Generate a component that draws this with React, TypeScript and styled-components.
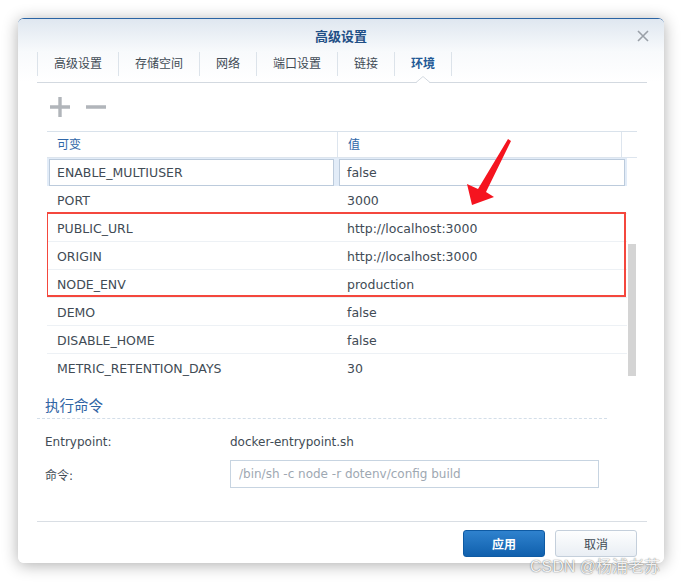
import React from "react";
import styled, { createGlobalStyle } from "styled-components";

const GlobalStyle = createGlobalStyle`
  html, body { margin: 0; padding: 0; background: #fff; }
  body {
    font-family: "DejaVu Sans", "Noto Sans CJK SC", sans-serif;
    color: #414b55;
  }
  * { box-sizing: border-box; }
`;

const tabs = ["高级设置", "存储空间", "网络", "端口设置", "链接", "环境"];

const envRows = [
  { name: "PORT", value: "3000" },
  { name: "PUBLIC_URL", value: "http://localhost:3000" },
  { name: "ORIGIN", value: "http://localhost:3000" },
  { name: "NODE_ENV", value: "production" },
  { name: "DEMO", value: "false" },
  { name: "DISABLE_HOME", value: "false" },
  { name: "METRIC_RETENTION_DAYS", value: "30" },
];

export default function App() {
  return (
    <Page>
      <GlobalStyle />
      <Dialog>
        <TitleBar>
          <span />
          <Title>高级设置</Title>
          <CloseButton>
            <svg width="12" height="12" viewBox="0 0 12 12">
              <path d="M1 1 L11 11 M11 1 L1 11" stroke="#9aa0a8" strokeWidth="1.6" />
            </svg>
          </CloseButton>
        </TitleBar>

        <Content>
          <TabBar>
            {tabs.map((t, i) => (
              <Tab key={t} $active={i === tabs.length - 1}>
                {t}
                {i === tabs.length - 1 && (
                  <Notch width="14" height="7" viewBox="0 0 14 7">
                    <path d="M0 7 L7 0.5 L14 7 Z" fill="#fff" />
                    <path d="M0 6.5 L7 0.5 L14 6.5" fill="none" stroke="#d3d9e0" strokeWidth="1" />
                  </Notch>
                )}
              </Tab>
            ))}
          </TabBar>

          <Panel>
            <Toolbar>
              <svg width="20" height="20" viewBox="0 0 20 20">
                <path d="M10 0 V20 M0 10 H20" stroke="#b1b5ba" strokeWidth="3.4" />
              </svg>
              <svg width="20" height="20" viewBox="0 0 20 20">
                <path d="M0 10 H20" stroke="#b1b5ba" strokeWidth="3.4" />
              </svg>
            </Toolbar>

            <Table>
              <HeaderRow>
                <HeaderCell>可变</HeaderCell>
                <HeaderCell>值</HeaderCell>
                <HeaderCell $last />
              </HeaderRow>
              <Body>
                <Rows>
                  <EditRow>
                    <EditBox $first>ENABLE_MULTIUSER</EditBox>
                    <EditBox>false</EditBox>
                  </EditRow>
                  {envRows.map((r) => (
                    <Row key={r.name}>
                      <Cell>{r.name}</Cell>
                      <Cell>{r.value}</Cell>
                    </Row>
                  ))}
                  <Highlight />
                </Rows>
                <ScrollTrack>
                  <ScrollThumb />
                </ScrollTrack>
              </Body>
            </Table>
          </Panel>

          <SectionTitle>执行命令</SectionTitle>
          <Form>
            <FormRow>
              <Label>Entrypoint:</Label>
              <Value>docker-entrypoint.sh</Value>
            </FormRow>
            <FormRow $tall>
              <Label>命令:</Label>
              <CommandInput placeholder="/bin/sh -c node -r dotenv/config build" />
            </FormRow>
          </Form>

          <Footer>
            <Button $primary>应用</Button>
            <Button>取消</Button>
          </Footer>
        </Content>
      </Dialog>

      <Arrow width="60" height="75" viewBox="0 0 60 75">
        <polygon points="48,4 51,6 26,57 34,62 12,70 7,49 18,54" fill="#f5141f" />
      </Arrow>
      <Watermark>CSDN @杨浦老苏</Watermark>
    </Page>
  );
}

const Page = styled.div`
  position: relative;
  width: 682px;
  height: 582px;
  padding: 18px 0 0 18px;
  overflow: hidden;
`;

const Dialog = styled.div`
  width: 646px;
  height: 545px;
  display: flex;
  flex-direction: column;
  background: #fff;
  border-top: 1px solid #2a64a4;
  border-radius: 6px;
  box-shadow: 0 2px 16px rgba(0, 0, 0, 0.32);
  overflow: hidden;
`;

const TitleBar = styled.div`
  height: 33px;
  display: grid;
  grid-template-columns: 1fr auto 1fr;
  align-items: center;
  background: linear-gradient(#dfe7f0, #f8fafc);
`;

const Title = styled.div`
  font-size: 13px;
  font-weight: bold;
  color: #1f4f86;
  margin-top: -1px;
`;

const CloseButton = styled.div`
  justify-self: end;
  margin-right: 15px;
  display: flex;
`;

const Content = styled.div`
  flex: 1;
  display: flex;
  flex-direction: column;
  padding: 0 17px 0 19px;
  background: linear-gradient(#f8fafc, #fff 30px);
`;

const TabBar = styled.div`
  height: 31px;
  display: flex;
  align-items: flex-start;
  border-bottom: 1px solid #d3d9e0;
`;

const Tab = styled.div<{ $active?: boolean }>`
  position: relative;
  height: 24px;
  padding: 0 16px;
  display: flex;
  align-items: center;
  font-size: 12px;
  line-height: 1;
  border-left: 1px solid #dce3ea;
  color: ${(p) => (p.$active ? "#245a96" : "#414b55")};
  font-weight: ${(p) => (p.$active ? "bold" : "normal")};
  &:last-child {
    border-right: 1px solid #dce3ea;
  }
`;

const Notch = styled.svg`
  position: absolute;
  left: 50%;
  margin-left: -7px;
  bottom: -7px;
`;

const Panel = styled.div`
  padding: 0 10px;
`;

const Toolbar = styled.div`
  height: 48px;
  display: flex;
  align-items: center;
  gap: 16px;
  padding-left: 3px;
`;

const Table = styled.div`
  border-top: 1px solid #d9e2eb;
`;

const HeaderRow = styled.div`
  display: grid;
  grid-template-columns: 291px 284px 1fr;
  height: 26px;
  border-bottom: 1px solid #dde5ee;
`;

const HeaderCell = styled.div<{ $last?: boolean }>`
  padding-left: 10px;
  line-height: 27px;
  font-size: 12px;
  color: #2f66a8;
  border-right: ${(p) => (p.$last ? "none" : "1px solid #dde5ee")};
`;

const Body = styled.div`
  display: flex;
  height: 219px;
  overflow: hidden;
`;

const Rows = styled.div`
  position: relative;
  width: 580px;
`;

const Row = styled.div`
  display: grid;
  grid-template-columns: 290px 1fr;
  align-items: center;
  height: 28px;
  padding-top: 1px;
  border-bottom: 1px solid #edf1f5;
`;

const EditRow = styled.div`
  display: grid;
  grid-template-columns: 290px 1fr;
  height: 28px;
  padding-top: 1px;
  background: #e2ecf8;
`;

const Cell = styled.div`
  padding-left: 10px;
  font-size: 12.5px;
  white-space: nowrap;
`;

const EditBox = styled.div<{ $first?: boolean }>`
  height: 27px;
  margin: ${(p) => (p.$first ? "0 3px 0 2px" : "0 2px")};
  padding-left: 7px;
  display: flex;
  align-items: center;
  font-size: 12.5px;
  background: #fff;
  border: 1px solid #bccbdc;
`;

const Highlight = styled.div`
  position: absolute;
  left: -1px;
  top: 54px;
  width: 580px;
  height: 85px;
  border: 2px solid #f4473d;
  pointer-events: none;
`;

const ScrollTrack = styled.div`
  width: 10px;
  padding-left: 1px;
`;

const ScrollThumb = styled.div`
  width: 8px;
  height: 132px;
  margin-top: 86px;
  background: #d4d4d4;
`;

const SectionTitle = styled.div`
  width: 570px;
  height: 24px;
  margin-top: 18px;
  padding-left: 8px;
  font-size: 14.5px;
  line-height: 22px;
  color: #2f64a4;
  border-bottom: 1px dashed #d3dee9;
`;

const Form = styled.div`
  display: flex;
  flex-direction: column;
  gap: 6px;
  margin-top: 11px;
  padding-left: 8px;
`;

const FormRow = styled.div<{ $tall?: boolean }>`
  display: flex;
  align-items: center;
  height: ${(p) => (p.$tall ? "28px" : "24px")};
  font-size: 12px;
`;

const Label = styled.div`
  width: 185px;
`;

const Value = styled.div``;

const CommandInput = styled.input`
  width: 369px;
  height: 28px;
  padding: 0 8px;
  border: 1px solid #c7d4e1;
  font-family: "DejaVu Sans", "Noto Sans CJK SC", sans-serif;
  font-size: 12px;
  color: #414b55;
  outline: none;
  &::placeholder {
    color: #9ea8b2;
  }
`;

const Footer = styled.div`
  margin-top: auto;
  height: 42px;
  display: flex;
  justify-content: flex-end;
  gap: 10px;
  padding: 8px 10px 6px 0;
  border-top: 1px solid #d9dee4;
`;

const Button = styled.div<{ $primary?: boolean }>`
  width: 82px;
  height: 27px;
  display: flex;
  align-items: center;
  justify-content: center;
  border-radius: 3px;
  font-size: 12px;
  font-weight: ${(p) => (p.$primary ? "bold" : "normal")};
  color: ${(p) => (p.$primary ? "#fff" : "#414b55")};
  background: ${(p) =>
    p.$primary ? "linear-gradient(#2f82ce, #1060ad)" : "linear-gradient(#fdfefe, #e9eef4)"};
  border: 1px solid ${(p) => (p.$primary ? "#0e5aa3" : "#c4cfdb")};
`;

const Arrow = styled.svg`
  position: absolute;
  left: 460px;
  top: 135px;
`;

const Watermark = styled.div`
  position: absolute;
  left: 530px;
  top: 553px;
  font-family: "Liberation Sans", "Noto Sans CJK SC", sans-serif;
  font-size: 16px;
  color: rgba(255, 255, 255, 0.92);
  text-shadow: 0 0 1px rgba(0, 0, 0, 0.55), 0 0 2px rgba(0, 0, 0, 0.2);
  white-space: nowrap;
`;
